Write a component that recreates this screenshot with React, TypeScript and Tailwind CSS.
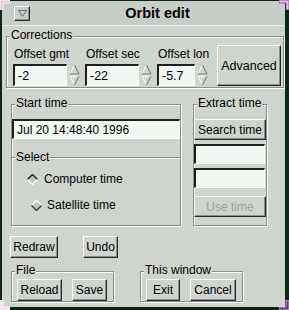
import type { ReactNode } from "react";

const raised =
  "border-t border-l border-r border-b border-t-white border-l-white border-r-[#262926] border-b-[#262926] shadow-[inset_-1px_-1px_0_#8c908c]";
const sunken =
  "border-t-2 border-l-2 border-r border-b border-t-[#1c1f1c] border-l-[#1c1f1c] border-r-white border-b-white bg-[#f3f7f3]";

export default function App() {
  return (
    <div className="relative box-border h-[310px] w-[289px] border-b-[3px] border-l-[2px] border-r-[4px] border-t-[1px] border-[#0e2618] bg-[#d0d4cf] font-['Liberation_Sans',Arial,sans-serif] text-[12px] leading-[14px] text-black">
      <div className="flex h-[25px] items-center border-b border-b-[#eef0ee] bg-[#c9cdc9]">
        <div className={`ml-[12px] flex h-[15px] w-[16px] items-center justify-center ${raised}`}>
          <svg width="9" height="7" viewBox="0 0 9 7">
            <path d="M0.5 0.5 H8.5 L4.5 6.5 Z" fill="none" stroke="#6a6e6a" />
          </svg>
        </div>
        <div className="flex-1 text-center text-[14.5px] font-bold">Orbit edit</div>
      </div>

      <Frame label="Corrections" className="ml-[4px] mt-[10px] w-[278px]">
        <div className="flex items-end pb-[1px] pl-[6px] pt-[8px]">
          <Spin label="Offset gmt" value="-2" inputW="w-[54px]" colW="w-[72px]" />
          <Spin label="Offset sec" value="-22" inputW="w-[54px]" colW="w-[72px]" />
          <Spin label="Offset lon" value="-5.7" inputW="w-[38px]" colW="w-[60px]" />
          <Button className="h-[41px] w-[64px] text-[12.5px]">Advanced</Button>
        </div>
      </Frame>

      <div className="mt-[16px] flex">
        <Frame label="Start time" className="ml-[9px] h-[122px] w-[170px]">
          <div className={`mt-[14px] flex h-[20px] w-[168px] items-center pl-[3px] ${sunken}`}>
            Jul 20 14:48:40 1996
          </div>
          <div className="relative mt-[18px] border-t border-t-[#8a8e8a] shadow-[inset_0_1px_0_#fff]">
            <span className="absolute -top-[8px] left-[3px] bg-[#d0d4cf] px-[1px]">Select</span>
            <div className="ml-[15px] mt-[14px] flex items-center gap-[6px]">
              <Diamond on />
              <span>Computer time</span>
            </div>
            <div className="ml-[19px] mt-[12px] flex items-center gap-[5px]">
              <Diamond />
              <span>Satellite time</span>
            </div>
          </div>
        </Frame>

        <Frame label="Extract time" className="ml-[12px] h-[122px] w-[74px]">
          <Button className="mt-[14px] h-[21px] w-[72px]">Search time</Button>
          <div className={`mt-[4px] h-[20px] w-[71px] ${sunken}`} />
          <div className={`mt-[4px] h-[20px] w-[71px] ${sunken}`} />
          <Button className="mt-[8px] h-[21px] w-[72px] text-[#9ca09c]">Use time</Button>
        </Frame>
      </div>

      <div className="mt-[10px] flex">
        <Button className="ml-[8px] h-[22px] w-[48px]">Redraw</Button>
        <Button className="ml-[25px] h-[22px] w-[35px]">Undo</Button>
      </div>

      <div className="mt-[13px] flex">
        <Frame label="File" className="ml-[9px] h-[31px] w-[103px]">
          <div className="flex pl-[5px] pt-[7px]">
            <Button className="h-[22px] w-[45px]">Reload</Button>
            <Button className="ml-[10px] h-[22px] w-[35px]">Save</Button>
          </div>
        </Frame>
        <Frame label="This window" className="ml-[26px] h-[31px] w-[103px]">
          <div className="flex pl-[5px] pt-[7px]">
            <Button className="h-[22px] w-[34px]">Exit</Button>
            <Button className="ml-[10px] h-[22px] w-[46px]">Cancel</Button>
          </div>
        </Frame>
      </div>

      <Corner className="-left-[2px] -top-[1px]" fill="#ecc6e0" edge="#ffffff" d="M0 0 H10 V3 H3 V10 H0 Z" />
      <Corner className="-right-[4px] -top-[1px]" fill="#e4bcd8" edge="#8a4a9a" d="M0 0 H10 V10 H7 V3 H0 Z" />
      <Corner className="-bottom-[3px] -left-[2px]" fill="#efe2ec" edge="#ffffff" d="M0 0 H3 V7 H10 V10 H0 Z" />
      <Corner className="-bottom-[3px] -right-[4px]" fill="#6e3488" edge="#d8c0e0" d="M7 0 H10 V10 H0 V7 H7 Z" />
    </div>
  );
}

function Frame({ label, className, children }: { label: string; className: string; children: ReactNode }) {
  return (
    <div className={`relative box-border border border-[#8a8e8a] shadow-[1px_1px_0_#fff,inset_1px_1px_0_#fff] ${className}`}>
      <span className="absolute -top-[9px] left-[3px] bg-[#d0d4cf] px-[1px]">{label}</span>
      {children}
    </div>
  );
}

function Button({ className, children }: { className: string; children: ReactNode }) {
  return (
    <div className={`box-border flex items-center justify-center bg-[#d0d4cf] ${raised} ${className}`}>
      {children}
    </div>
  );
}

function Spin({ label, value, inputW, colW }: { label: string; value: string; inputW: string; colW: string }) {
  return (
    <div className={`flex flex-col ${colW}`}>
      <span className="mb-[3px] pl-[1px]">{label}</span>
      <div className="flex items-center">
        <div className={`box-border flex h-[22px] items-center pl-[3px] text-[12.5px] ${sunken} ${inputW}`}>{value}</div>
        <svg className="ml-[2px]" width="11" height="22" viewBox="0 0 11 22">
          <path d="M1 10 L5.5 1" stroke="#ffffff" fill="none" />
          <path d="M5.5 1 L10 10 H1" stroke="#6e726e" fill="none" />
          <path d="M1 12 H10" stroke="#ffffff" fill="none" />
          <path d="M1 12 L5.5 21" stroke="#ffffff" fill="none" />
          <path d="M5.5 21 L10 12" stroke="#6e726e" fill="none" />
        </svg>
      </div>
    </div>
  );
}

function Diamond({ on }: { on?: boolean }) {
  const a = on ? "#1c1f1c" : "#ffffff";
  const b = on ? "#ffffff" : "#3a3d3a";
  return (
    <svg width="11" height="11" viewBox="0 0 11 11">
      <path d="M5.5 0.5 L10.5 5.5 L5.5 10.5 L0.5 5.5 Z" fill="#c2c6c2" />
      <path d="M0.5 5.5 L5.5 0.5 L10.5 5.5" stroke={a} fill="none" strokeWidth="1.4" />
      <path d="M0.5 5.5 L5.5 10.5 L10.5 5.5" stroke={b} fill="none" strokeWidth="1.4" />
    </svg>
  );
}

function Corner({ className, fill, edge, d }: { className: string; fill: string; edge: string; d: string }) {
  return (
    <svg className={`absolute ${className}`} width="10" height="10" viewBox="0 0 10 10">
      <path d={d} fill={fill} stroke={edge} strokeWidth="0.8" />
    </svg>
  );
}
